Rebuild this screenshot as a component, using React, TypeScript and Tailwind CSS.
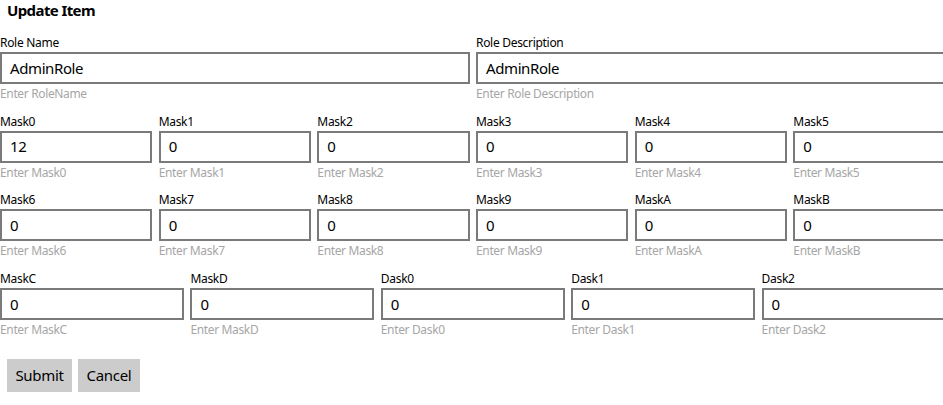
import React from "react";

type F = { label: string; value: string; hint: string };

function Field({ label, value, hint }: F) {
  return (
    <div className="pr-[6.5px] min-w-0">
      <div className="h-[20px] pt-[2px] text-[12px] leading-[18px] tracking-[-0.3px] text-black whitespace-nowrap">{label}</div>
      <div className="h-[32px] border-2 border-[#7a7a7a] bg-white pl-[8px] flex items-center text-[15px] tracking-[-0.4px] text-black whitespace-nowrap overflow-hidden">
        {value}
      </div>
      <div className="h-[20px] text-[12px] leading-[20px] tracking-[-0.35px] text-[#a6a6a6] whitespace-nowrap">{hint}</div>
    </div>
  );
}

const row2: F[] = ["Mask0", "Mask1", "Mask2", "Mask3", "Mask4", "Mask5"].map((m, i) => ({
  label: m,
  value: i === 0 ? "12" : "0",
  hint: "Enter " + m,
}));
const row3: F[] = ["Mask6", "Mask7", "Mask8", "Mask9", "MaskA", "MaskB"].map((m) => ({
  label: m,
  value: "0",
  hint: "Enter " + m,
}));
const row4: F[] = ["MaskC", "MaskD", "Dask0", "Dask1", "Dask2"].map((m) => ({
  label: m,
  value: "0",
  hint: "Enter " + m,
}));

export default function App() {
  return (
    <div className="w-[943px] h-[405px] overflow-hidden bg-white font-['Segoe_UI','Noto_Sans',sans-serif]">
      <div className="w-[952px]">
        <div className="h-[32px] pl-[7px] text-[15px] leading-[20px] font-bold tracking-[-0.6px] text-black">Update Item</div>
        <div className="flex flex-col gap-y-[6.67px]">
          <div className="grid grid-cols-2">
            <Field label="Role Name" value="AdminRole" hint="Enter RoleName" />
            <Field label="Role Description" value="AdminRole" hint="Enter Role Description" />
          </div>
          <div className="grid grid-cols-6">
            {row2.map((f) => (
              <Field key={f.label} {...f} />
            ))}
          </div>
          <div className="grid grid-cols-6">
            {row3.map((f) => (
              <Field key={f.label} {...f} />
            ))}
          </div>
          <div className="grid grid-cols-5">
            {row4.map((f) => (
              <Field key={f.label} {...f} />
            ))}
          </div>
        </div>
        <div className="flex gap-[6px] pl-[7px] mt-[19px]">
          <button className="h-[33px] w-[65px] bg-[#cccccc] text-[15px] tracking-[-0.3px] text-black">Submit</button>
          <button className="h-[33px] w-[62px] bg-[#cccccc] text-[15px] tracking-[-0.3px] text-black">Cancel</button>
        </div>
      </div>
    </div>
  );
}
